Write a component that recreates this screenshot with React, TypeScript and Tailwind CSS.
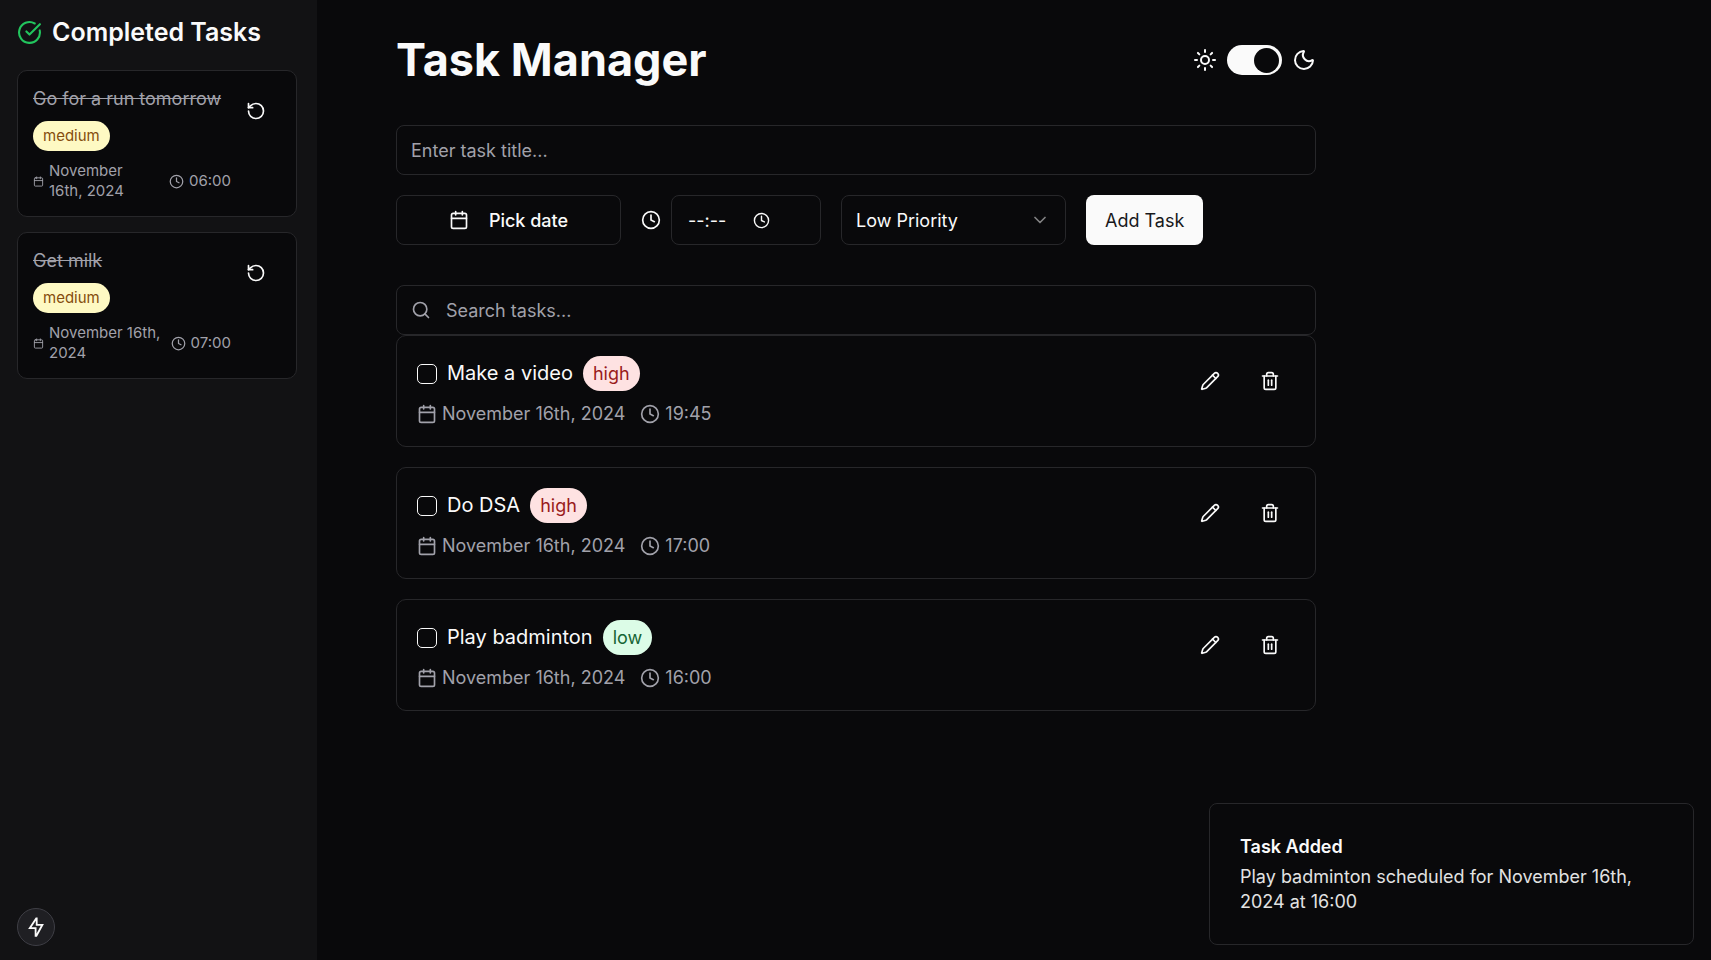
import { useState } from "react";
import {
  Calendar,
  ChevronDown,
  CircleCheckBig,
  Clock,
  Moon,
  Pencil,
  RotateCcw,
  Search,
  Sun,
  Trash2,
} from "lucide-react";

type Priority = "low" | "medium" | "high";

interface Task {
  title: string;
  priority: Priority;
  date: string;
  time: string;
}

const badgeColors: Record<Priority, string> = {
  low: "bg-[#dcfce7] text-[#166534]",
  medium: "bg-[#fef9c3] text-[#854d0e]",
  high: "bg-[#fee2e2] text-[#991b1b]",
};

const completed: Task[] = [
  { title: "Go for a run tomorrow", priority: "medium", date: "November 16th,\u00a02024", time: "06:00" },
  { title: "Get milk", priority: "medium", date: "November\u00a016th, 2024", time: "07:00" },
];

const tasks: Task[] = [
  { title: "Make a video", priority: "high", date: "November 16th, 2024", time: "19:45" },
  { title: "Do DSA", priority: "high", date: "November 16th, 2024", time: "17:00" },
  { title: "Play badminton", priority: "low", date: "November 16th, 2024", time: "16:00" },
];

function BoltIcon() {
  return (
    <svg viewBox="0 0 20 20" className="size-5 overflow-visible" fill="none" stroke="currentColor" strokeWidth="1.8" aria-hidden="true">
      <path d="M10.3 1.3 3.8 11.2h5.8v7.6h.8L16.4 7.8h-5.7V1.3z" />
    </svg>
  );
}

function CompletedCard({ task }: { task: Task }) {
  return (
    <li className="flex items-start rounded-[10px] border border-[#27272a] bg-[#09090b] p-[15px]">
      <div className="flex min-w-0 flex-1 flex-col items-start gap-2.5">
        <h3 className="text-lg/[25px] text-[#a1a1aa] line-through">{task.title}</h3>
        <span className={`rounded-full px-2.5 py-[5px] text-[15px]/5 ${badgeColors[task.priority]}`}>
          {task.priority}
        </span>
        <div className="flex w-full items-center gap-2.5 text-[15px]/5 text-[#a1a1aa]">
          <span className="flex min-w-0 flex-1 items-center gap-[5px]">
            <Calendar className="size-[11px] shrink-0" />
            {task.date}
          </span>
          <span className="flex shrink-0 items-center gap-[5px]">
            <Clock className="size-[15px]" />
            {task.time}
          </span>
        </div>
      </div>
      <button
        type="button"
        aria-label={`Restore ${task.title}`}
        className="flex size-[50px] shrink-0 items-center justify-center rounded-lg"
      >
        <RotateCcw className="size-5" />
      </button>
    </li>
  );
}

function TaskCard({ task }: { task: Task }) {
  return (
    <li className="flex items-start justify-between rounded-[10px] border border-[#27272a] p-5">
      <div className="flex flex-col gap-2.5">
        <label className="flex items-center gap-2.5">
          <input
            type="checkbox"
            className="size-5 appearance-none rounded-[5px] border border-[#fafafa] checked:bg-[#fafafa]"
          />
          <span className="text-xl/[35px]">{task.title}</span>
          <span className={`rounded-full px-2.5 py-[5px] text-lg/[25px] ${badgeColors[task.priority]}`}>
            {task.priority}
          </span>
        </label>
        <div className="flex items-center gap-[15px] text-lg/[25px] text-[#a1a1aa]">
          <span className="flex items-center gap-[5px]">
            <Calendar className="size-5" />
            {task.date}
          </span>
          <span className="flex items-center gap-[5px]">
            <Clock className="size-5" />
            {task.time}
          </span>
        </div>
      </div>
      <div className="flex gap-2.5">
        <button
          type="button"
          aria-label={`Edit ${task.title}`}
          className="flex size-[50px] items-center justify-center rounded-lg"
        >
          <Pencil className="size-5" />
        </button>
        <button
          type="button"
          aria-label={`Delete ${task.title}`}
          className="flex size-[50px] items-center justify-center rounded-lg"
        >
          <Trash2 className="size-5" />
        </button>
      </div>
    </li>
  );
}

export default function App() {
  const [dark, setDark] = useState(true);

  return (
    <div className="flex min-h-screen bg-[#09090b] font-['Inter',sans-serif] text-lg/[25px] text-[#fafafa]">
      <aside className="w-[317px] shrink-0 bg-[#121214] py-4 pr-5 pl-[17px]">
        <h2 className="mb-[22px] flex items-center gap-2.5 text-[25px]/8 font-semibold">
          <CircleCheckBig className="size-[25px] text-[#22c55e]" />
          Completed Tasks
        </h2>
        <ul className="flex flex-col gap-[15px]">
          {completed.map((task) => (
            <CompletedCard key={task.title} task={task} />
          ))}
        </ul>
      </aside>

      <main className="min-w-0 flex-1 px-[79px] pt-[35px]">
        <div className="max-w-[920px]">
          <header className="mb-10 flex items-center justify-between">
            <h1 className="text-[45px]/[50px] font-bold">Task Manager</h1>
            <div className="flex items-center gap-2.5">
              <Sun className="size-6" />
              <button
                type="button"
                role="switch"
                aria-checked={dark}
                aria-label="Dark mode"
                onClick={() => setDark(!dark)}
                className={`flex h-[30px] w-[55px] items-center rounded-full bg-[#fafafa] px-[3px] ${dark ? "justify-end" : "justify-start"}`}
              >
                <span className="size-[25px] rounded-full bg-[#09090b]" />
              </button>
              <Moon className="size-6" />
            </div>
          </header>

          <form className="mb-10 flex flex-col gap-5" onSubmit={(e) => e.preventDefault()}>
            <input
              type="text"
              aria-label="Task title"
              placeholder="Enter task title..."
              className="h-[50px] w-full rounded-lg border border-[#27272a] px-3.5 placeholder:text-[#a1a1aa]"
            />
            <div className="flex flex-wrap gap-5">
              <button
                type="button"
                className="flex h-[50px] w-[225px] items-center justify-center gap-5 rounded-lg border border-[#27272a] font-medium"
              >
                <Calendar className="size-5" />
                Pick date
              </button>
              <label className="flex items-center gap-2.5">
                <Clock className="size-5" />
                <span className="flex h-[50px] w-[150px] items-center rounded-lg border border-[#27272a] px-4">
                  <input
                    type="text"
                    aria-label="Task time"
                    placeholder="--:--"
                    className="w-[65px] placeholder:text-[#fafafa]"
                  />
                  <Clock className="size-[17px]" />
                </span>
              </label>
              <div className="grid h-[50px] w-[225px] items-center">
                <select
                  aria-label="Priority"
                  defaultValue="low"
                  className="col-start-1 row-start-1 h-full w-full appearance-none rounded-lg border border-[#27272a] bg-[#09090b] px-3.5"
                >
                  <option value="low">Low Priority</option>
                  <option value="medium">Medium Priority</option>
                  <option value="high">High Priority</option>
                </select>
                <ChevronDown className="pointer-events-none col-start-1 row-start-1 mr-4 size-5 justify-self-end opacity-50" />
              </div>
              <button type="submit" className="h-[50px] rounded-lg bg-[#fafafa] px-[19px] text-[#18181b]">
                Add Task
              </button>
            </div>
          </form>

          <label className="flex h-[50px] items-center gap-[15px] rounded-lg border border-[#27272a] px-3.5">
            <Search className="size-5 text-[#a1a1aa]" />
            <input
              type="search"
              aria-label="Search tasks"
              placeholder="Search tasks..."
              className="min-w-0 flex-1 placeholder:text-[#a1a1aa]"
            />
          </label>
          <ul className="flex flex-col gap-5">
            {tasks.map((task) => (
              <TaskCard key={task.title} task={task} />
            ))}
          </ul>
        </div>
      </main>

      <button
        type="button"
        aria-label="Quick actions"
        className="fixed bottom-3.5 left-[17px] flex size-[38px] items-center justify-center rounded-full border border-[#3f3f46] bg-[#1f1f23]"
      >
        <BoltIcon />
      </button>

      <section
        role="status"
        className="fixed right-[17px] bottom-[15px] flex w-[485px] flex-col gap-[5px] rounded-lg border border-[#27272a] bg-[#09090b] p-[30px]"
      >
        <h2 className="font-semibold">Task Added</h2>
        <p className="opacity-90">Play badminton scheduled for November 16th, 2024 at 16:00</p>
      </section>
    </div>
  );
}
